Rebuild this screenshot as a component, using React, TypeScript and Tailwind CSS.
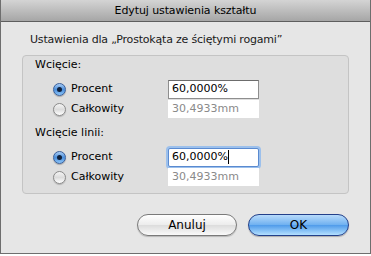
import React from 'react'

const font = { fontFamily: '"DejaVu Sans", "Liberation Sans", sans-serif' }

function Radio({ checked }: { checked?: boolean }) {
  return checked ? (
    <span className="flex h-[13px] w-[13px] items-center justify-center rounded-full border border-[#3a5f9a] bg-[linear-gradient(to_bottom,#a9cdf5,#4b8fdc_50%,#8cc4f7)] shadow-[0_1px_1px_rgba(0,0,0,0.25)]">
      <span className="h-[5px] w-[5px] rounded-full bg-[#10203a]" />
    </span>
  ) : (
    <span className="h-[13px] w-[13px] rounded-full border border-[#8a8a8a] bg-[linear-gradient(to_bottom,#f4f4f4,#dcdcdc_50%,#ffffff)] shadow-[0_1px_1px_rgba(0,0,0,0.2)]" />
  )
}

function OptionRows({ focused }: { focused?: boolean }) {
  return (
    <div className="flex flex-col">
      <div className="flex h-[20px] items-center">
        <div className="ml-[30px] flex w-[115px] items-center gap-[5px]">
          <Radio checked />
          <span className="text-[11px] leading-[14px] text-black">Procent</span>
        </div>
        <div
          className={
            focused
              ? 'flex h-[19px] w-[91px] items-center rounded-[2px] border border-[#5a8ad0] bg-white pl-[3px] shadow-[0_0_0_2px_#9cc0ec]'
              : 'flex h-[19px] w-[91px] items-center border border-[#8e8e8e] border-t-[#6c6c6c] bg-white pl-[3px]'
          }
        >
          <span className="text-[11px] leading-[14px] text-black">60,0000%</span>
          {focused && <span className="h-[14px] w-px bg-black" />}
        </div>
      </div>
      <div className="flex h-[20px] items-center">
        <div className="ml-[30px] flex w-[115px] items-center gap-[5px]">
          <Radio />
          <span className="text-[11px] leading-[14px] text-black">Całkowity</span>
        </div>
        <div className="flex h-[18px] w-[91px] items-center bg-white pl-[4px]">
          <span className="text-[11px] leading-[14px] text-[#8a8a8a]">30,4933mm</span>
        </div>
      </div>
    </div>
  )
}

export default function App() {
  return (
    <div className="h-[256px] w-[371px] bg-white" style={font}>
      <div className="flex h-[254px] w-[371px] flex-col border border-t-0 border-[#6e6e6e] bg-[#e6e6e6]">
        <div className="flex h-[22px] shrink-0 items-center justify-center border-b border-[#5e5e5e] bg-[linear-gradient(to_bottom,#d4d4d4,#a6a6a6)]">
          <span className="text-[11px] leading-[14px] tracking-[-0.1px] text-black">Edytuj ustawienia kształtu</span>
        </div>

        <div className="flex flex-1 flex-col px-[21px]">
          <div className="mt-[11px] pl-[8px] text-[11px] leading-[14px] tracking-[-0.2px] text-[#1a1a1a]">
            Ustawienia dla „Prostokąta ze ściętymi rogami”
          </div>
          <div className="mt-[8px] flex h-[139px] flex-col rounded-[4px] border border-[#c4c4c4] bg-[#dedede] pt-[2px]">
            <div className="ml-[12px] text-[11px] leading-[14px] text-black">Wcięcie:</div>
            <div className="mt-[7px]">
              <OptionRows />
            </div>
            <div className="ml-[12px] mt-[7px] text-[11px] leading-[14px] text-black">Wcięcie linii:</div>
            <div className="mt-[7px]">
              <OptionRows focused />
            </div>
          </div>

          <div className="mt-[20px] flex justify-end gap-[11px]">
            <button className="flex h-[22px] w-[100px] items-center justify-center rounded-full border border-[#7a7a7a] bg-[linear-gradient(to_bottom,#ffffff,#ececec_50%,#dcdcdc_51%,#fafafa)] text-[12px] leading-[14px] text-black shadow-[0_1px_1px_rgba(0,0,0,0.2)]">
              Anuluj
            </button>
            <button className="flex h-[22px] w-[101px] items-center justify-center rounded-full border border-[#23408a] bg-[linear-gradient(to_bottom,#b8dbfb,#6eb0f0_50%,#4f9bea_51%,#b4e0ff)] text-[12px] leading-[14px] text-black shadow-[0_1px_1px_rgba(0,0,0,0.25)]">
              OK
            </button>
          </div>
        </div>
      </div>
    </div>
  )
}
